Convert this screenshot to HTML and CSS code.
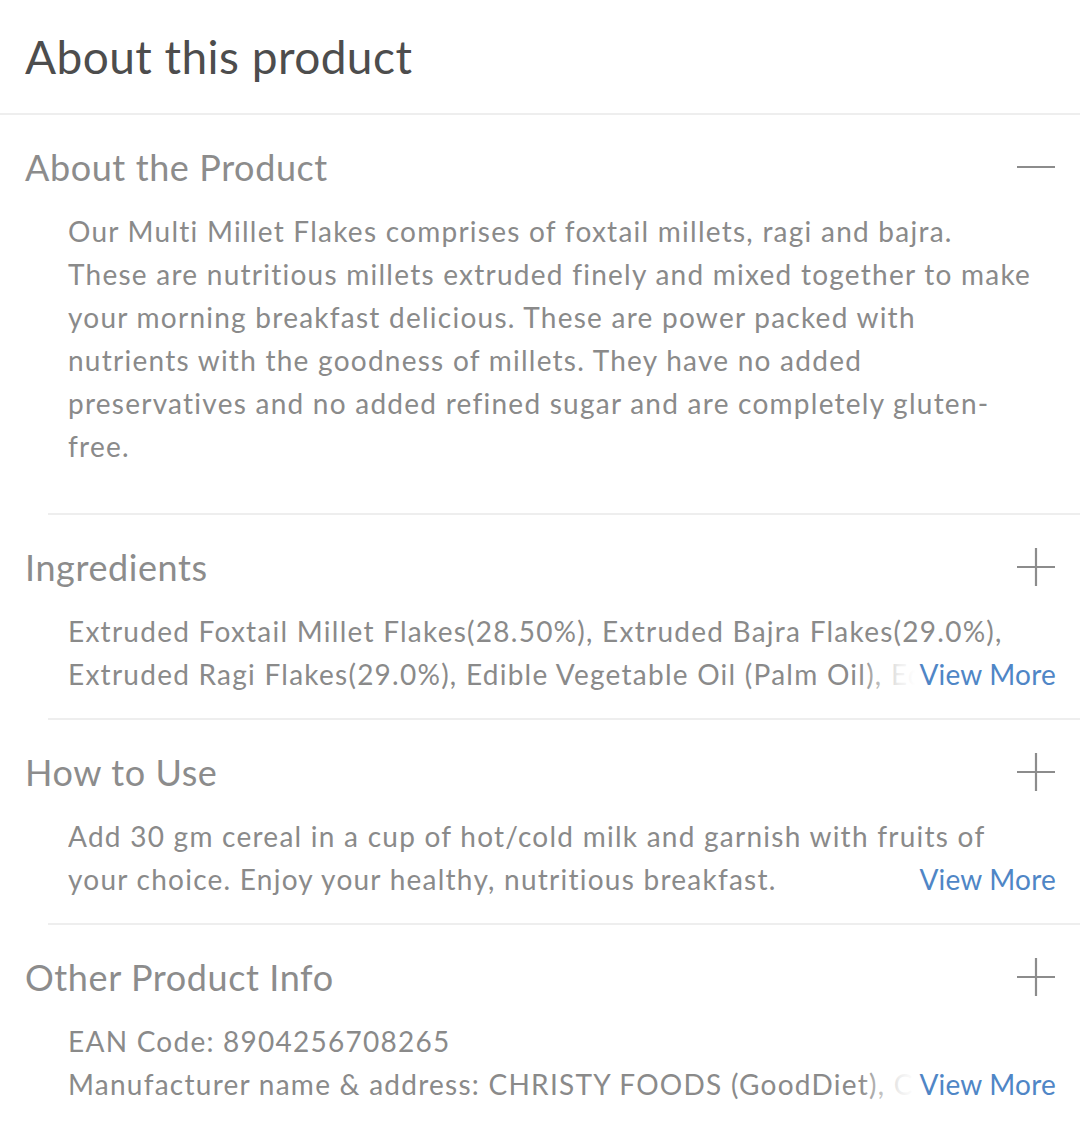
FILE: index.html
```html
<!DOCTYPE html>
<html>
<head>
<meta charset="utf-8">
<link rel="stylesheet" href="styles.css">
</head>
<body>
<div class="page">
  <h1 class="title">About this product</h1>
  <div class="rule-full"></div>

  <section class="sec">
    <div class="sec-head">
      <h2 class="sec-title">About the Product</h2>
      <svg class="toggle" width="40" height="40" viewBox="0 0 40 40"><path d="M1 20H39" stroke="#8c8c8c" stroke-width="2.2" fill="none"/></svg>
    </div>
    <div class="sec-body open">
      <p class="txt">Our Multi Millet Flakes comprises of foxtail millets, ragi and bajra. These are nutritious millets extruded finely and mixed together to make your morning breakfast delicious. These are power packed with nutrients with the goodness of millets. They have no added preservatives and no added refined sugar and are completely gluten-free.</p>
    </div>
  </section>
  <div class="rule"></div>

  <section class="sec">
    <div class="sec-head">
      <h2 class="sec-title">Ingredients</h2>
      <svg class="toggle" width="40" height="40" viewBox="0 0 40 40"><path d="M1 20H39M20 1V39" stroke="#8c8c8c" stroke-width="2.2" fill="none"/></svg>
    </div>
    <div class="sec-body">
      <div class="clamp">
        <p class="txt">Extruded Foxtail Millet Flakes(28.50%), Extruded Bajra Flakes(29.0%), Extruded Ragi Flakes(29.0%), Edible Vegetable Oil (Palm Oil), Edible Salt, Sugar, Malt Extract, Natural Flavours and Antioxidants.</p>
        <span class="more">View More</span>
      </div>
    </div>
  </section>
  <div class="rule"></div>

  <section class="sec">
    <div class="sec-head">
      <h2 class="sec-title">How to Use</h2>
      <svg class="toggle" width="40" height="40" viewBox="0 0 40 40"><path d="M1 20H39M20 1V39" stroke="#8c8c8c" stroke-width="2.2" fill="none"/></svg>
    </div>
    <div class="sec-body">
      <div class="clamp">
        <p class="txt">Add 30 gm cereal in a cup of hot/cold milk and garnish with fruits of your choice. Enjoy your healthy, nutritious breakfast.</p>
        <span class="more solid">View More</span>
      </div>
    </div>
  </section>
  <div class="rule"></div>

  <section class="sec">
    <div class="sec-head">
      <h2 class="sec-title">Other Product Info</h2>
      <svg class="toggle" width="40" height="40" viewBox="0 0 40 40"><path d="M1 20H39M20 1V39" stroke="#8c8c8c" stroke-width="2.2" fill="none"/></svg>
    </div>
    <div class="sec-body">
      <div class="clamp">
        <p class="txt">EAN Code: 8904256708265<br>Manufacturer name &amp; address: CHRISTY FOODS (GoodDiet), Christy Friedgram Industry, Andipalayam, Tiruchengode, Namakkal, Tamil Nadu</p>
        <span class="more">View More</span>
      </div>
    </div>
  </section>
</div>
</body>
</html>
```

FILE: styles.css
```css
html, body {
  margin: 0;
  padding: 0;
  background: #ffffff;
}

.page {
  width: 1080px;
  font-family: "Lato", "Noto Sans", sans-serif;
  font-variant-ligatures: none;
}

.title {
  margin: 0;
  padding: 30px 25px 0;
  height: 83px;
  box-sizing: content-box;
  font-size: 46px;
  font-weight: 400;
  line-height: 54px;
  letter-spacing: 0.45px;
  color: #4d4d4d;
}

.rule-full {
  height: 2px;
  background: #eeeeee;
}

.rule {
  height: 2px;
  margin-left: 48px;
  background: #eeeeee;
}

.sec-head {
  display: flex;
  align-items: center;
  justify-content: space-between;
  padding: 30px 24px 0 25px;
  height: 44px;
}

.sec-title {
  margin: 0;
  font-size: 36px;
  font-weight: 400;
  line-height: 44px;
  letter-spacing: 0.6px;
  color: #8c8c8c;
}

.toggle {
  display: block;
}

.sec-body {
  padding: 21px 24px 22px 68px;
}

.sec-body.open {
  padding-bottom: 45px;
}

.txt {
  margin: 0;
  padding-right: 16px;
  font-size: 28px;
  line-height: 43px;
  letter-spacing: 1.25px;
  color: #8a8a8a;
}

.clamp {
  position: relative;
  max-height: 86px;
  overflow: hidden;
}

.more {
  position: absolute;
  right: 0;
  bottom: 0;
  font-size: 28px;
  line-height: 43px;
  letter-spacing: 0.2px;
  color: #4f86c6;
  padding-left: 60px;
  background: linear-gradient(to right, rgba(255,255,255,0) 0, rgba(255,255,255,0.85) 40px, #ffffff 56px);
}

.more.solid {
  background: #ffffff;
  padding-left: 8px;
}
```
